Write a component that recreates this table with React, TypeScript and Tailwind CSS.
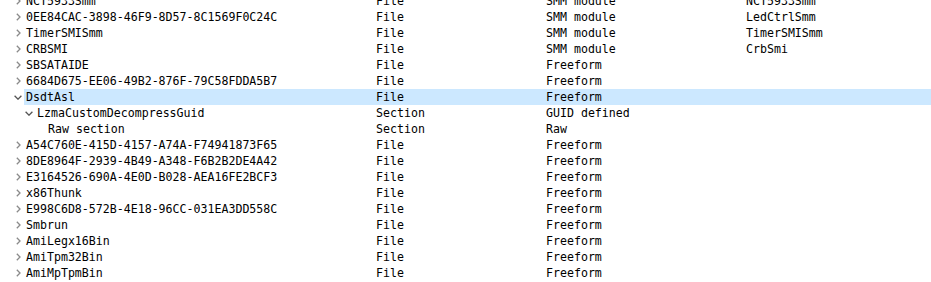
import React from "react";

type Row = {
  name: string;
  type: string;
  sub: string;
  text?: string;
  level: number;
  arrow: "none" | "closed" | "open";
  selected?: boolean;
};

const rows: Row[] = [
  { name: "NCT5933Smm", type: "File", sub: "SMM module", text: "NCT5933Smm", level: 1, arrow: "closed" },
  { name: "0EE84CAC-3898-46F9-8D57-8C1569F0C24C", type: "File", sub: "SMM module", text: "LedCtrlSmm", level: 1, arrow: "closed" },
  { name: "TimerSMISmm", type: "File", sub: "SMM module", text: "TimerSMISmm", level: 1, arrow: "closed" },
  { name: "CRBSMI", type: "File", sub: "SMM module", text: "CrbSmi", level: 1, arrow: "closed" },
  { name: "SBSATAIDE", type: "File", sub: "Freeform", level: 1, arrow: "closed" },
  { name: "6684D675-EE06-49B2-876F-79C58FDDA5B7", type: "File", sub: "Freeform", level: 1, arrow: "closed" },
  { name: "DsdtAsl", type: "File", sub: "Freeform", level: 1, arrow: "open", selected: true },
  { name: "LzmaCustomDecompressGuid", type: "Section", sub: "GUID defined", level: 2, arrow: "open" },
  { name: "Raw section", type: "Section", sub: "Raw", level: 3, arrow: "none" },
  { name: "A54C760E-415D-4157-A74A-F74941873F65", type: "File", sub: "Freeform", level: 1, arrow: "closed" },
  { name: "8DE8964F-2939-4B49-A348-F6B2B2DE4A42", type: "File", sub: "Freeform", level: 1, arrow: "closed" },
  { name: "E3164526-690A-4E0D-B028-AEA16FE2BCF3", type: "File", sub: "Freeform", level: 1, arrow: "closed" },
  { name: "x86Thunk", type: "File", sub: "Freeform", level: 1, arrow: "closed" },
  { name: "E998C6D8-572B-4E18-96CC-031EA3DD558C", type: "File", sub: "Freeform", level: 1, arrow: "closed" },
  { name: "Smbrun", type: "File", sub: "Freeform", level: 1, arrow: "closed" },
  { name: "AmiLegx16Bin", type: "File", sub: "Freeform", level: 1, arrow: "closed" },
  { name: "AmiTpm32Bin", type: "File", sub: "Freeform", level: 1, arrow: "closed" },
  { name: "AmiMpTpmBin", type: "File", sub: "Freeform", level: 1, arrow: "closed" },
];

function Arrow({ kind }: { kind: Row["arrow"] }) {
  if (kind === "none") return null;
  if (kind === "closed")
    return (
      <svg width="5" height="8" viewBox="0 0 5 8" className="block">
        <path d="M0.8 0.8 L4 4 L0.8 7.2" fill="none" stroke="#8a8a8a" strokeWidth="1.3" />
      </svg>
    );
  return (
    <svg width="8" height="5" viewBox="0 0 8 5" className="block">
      <path d="M0.6 0.8 L4 4.2 L7.4 0.8" fill="none" stroke="#555555" strokeWidth="1.3" />
    </svg>
  );
}

export default function App() {
  return (
    <div
      className="w-[931px] h-[282px] overflow-hidden bg-white text-[#000000] text-[11.6px] leading-[16px]"
      style={{ fontFamily: '"DejaVu Sans Mono", "Liberation Mono", monospace' }}
    >
      <div className="-mt-[7px] flex flex-col">
        {rows.map((r, i) => (
          <div key={i} className="flex h-[16px] items-stretch whitespace-nowrap">
            <div style={{ width: 12 + (r.level - 1) * 11 }} className="shrink-0" />
            <div className="w-[12px] shrink-0 flex items-center justify-center">
              <Arrow kind={r.arrow} />
            </div>
            <div className={`flex flex-1 pl-[2px] ${r.selected ? "bg-[#cce8ff]" : ""}`}>
              <div className="flex-1 min-w-0">{r.name}</div>
              <div className="w-[170px] shrink-0">{r.type}</div>
              <div className="w-[200px] shrink-0">{r.sub}</div>
              <div className="w-[185px] shrink-0">{r.text ?? ""}</div>
            </div>
          </div>
        ))}
      </div>
    </div>
  );
}
